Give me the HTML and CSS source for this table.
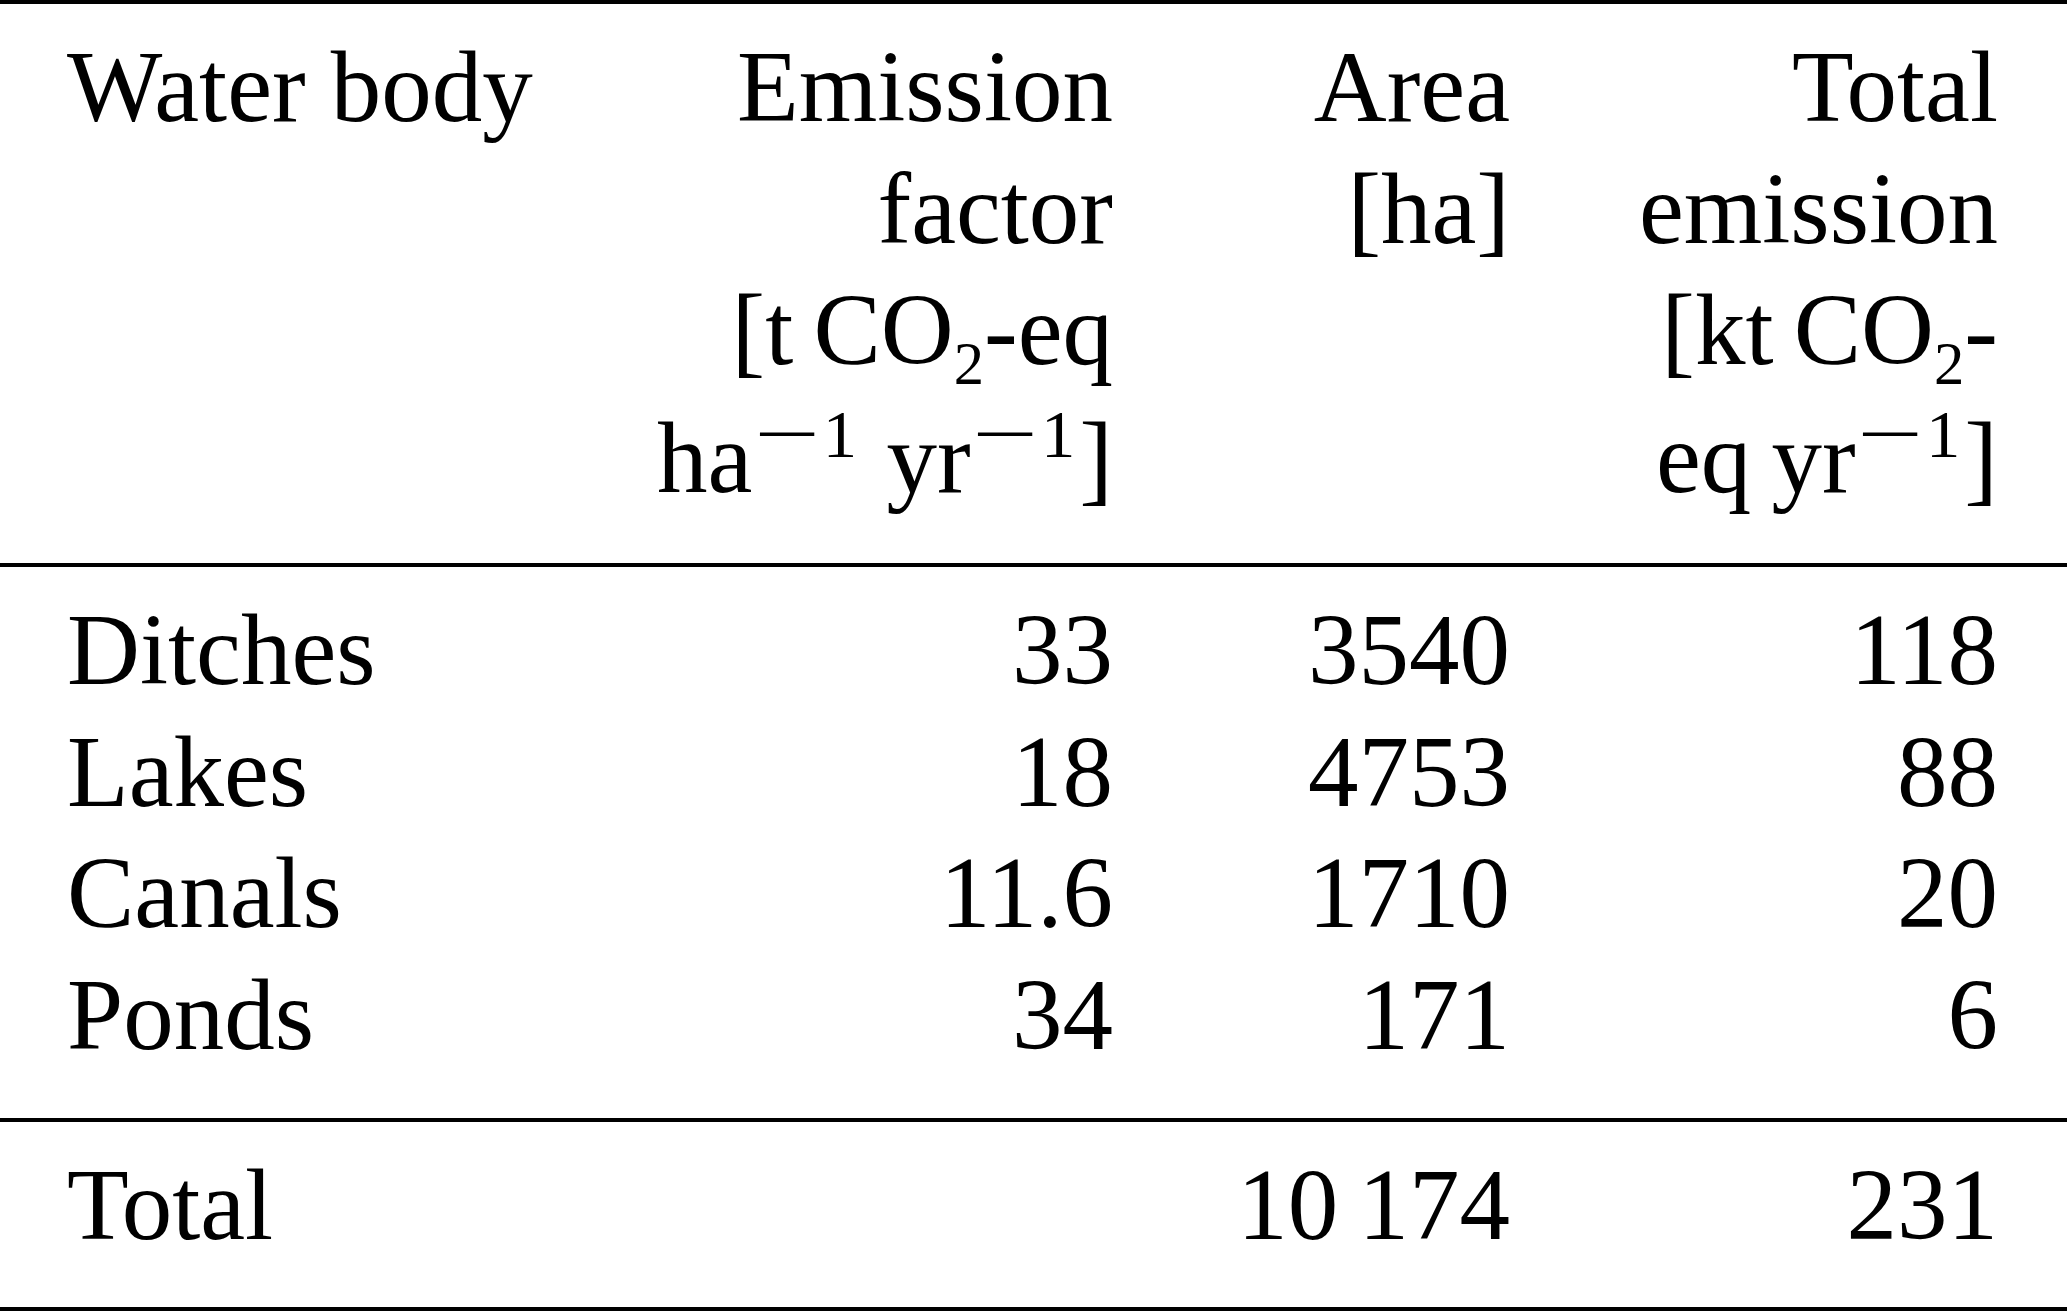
FILE: index.html
```html
<!DOCTYPE html>
<html lang="en">

<head>
    <meta charset="utf-8">
    <title>Emissions from water bodies</title>
    <link rel="stylesheet" href="styles.css">
</head>

<body>
    <table class="emissions">
        <thead>
            <tr>
                <th class="col-name">Water body</th>
                <th class="col-factor">Emission factor <span class="unit">[t&thinsp;CO<sub>2</sub>-eq</span> ha<sup><span class="minus">&minus;</span>1</sup> yr<sup><span class="minus">&minus;</span>1</sup>]</th>
                <th class="col-area">Area [ha]</th>
                <th class="col-total">Total emission [kt&thinsp;CO<sub>2</sub>-eq&thinsp;yr<sup><span class="minus">&minus;</span>1</sup>]</th>
            </tr>
        </thead>
        <tbody>
            <tr>
                <td class="col-name">Ditches</td>
                <td class="col-factor">33</td>
                <td class="col-area">3540</td>
                <td class="col-total">118</td>
            </tr>
            <tr>
                <td class="col-name">Lakes</td>
                <td class="col-factor">18</td>
                <td class="col-area">4753</td>
                <td class="col-total">88</td>
            </tr>
            <tr>
                <td class="col-name">Canals</td>
                <td class="col-factor">11.6</td>
                <td class="col-area">1710</td>
                <td class="col-total">20</td>
            </tr>
            <tr>
                <td class="col-name">Ponds</td>
                <td class="col-factor">34</td>
                <td class="col-area">171</td>
                <td class="col-total">6</td>
            </tr>
        </tbody>
        <tfoot>
            <tr>
                <td class="col-name">Total</td>
                <td class="col-factor"></td>
                <td class="col-area">10&thinsp;174</td>
                <td class="col-total">231</td>
            </tr>
        </tfoot>
    </table>
</body>

</html>
```

FILE: styles.css
```css
:root {
    --ink: #000;
    --rule: 4px solid #000;
}

body {
    margin: 0;
    background: #fff;
    color: var(--ink);
    font-family: 'Liberation Serif', 'Times New Roman', serif;
}

.emissions {
    width: 2067px;
    table-layout: fixed;
    border-collapse: separate;
    border-spacing: 0;
    font-size: 101px;
    line-height: 121.7px;
}

.emissions th,
.emissions td {
    box-sizing: border-box;
    padding: 0;
    font-weight: normal;
    text-align: right;
    vertical-align: top;
    white-space: normal;
}

/* columns */
.col-name {
    width: 654px;
    padding-left: 67px !important;
    text-align: left !important;
}

.col-factor {
    width: 556px;
    padding-right: 97px !important;
}

.col-area {
    width: 398px;
    padding-right: 98px !important;
}

.col-total {
    width: 459px;
    padding-right: 69px !important;
}

/* rules */
.emissions thead th {
    border-top: var(--rule);
    border-bottom: var(--rule);
    padding-top: 23px;
    padding-bottom: 43px;
}

.emissions tbody tr:first-child td {
    padding-top: 23px;
}

.emissions tbody tr:last-child td {
    padding-bottom: 41px;
}

.emissions tfoot td {
    border-top: var(--rule);
    border-bottom: var(--rule);
    padding-top: 23px;
    padding-bottom: 41px;
}

/* units */
.unit {
    white-space: nowrap;
}

sub {
    font-size: 0.6em;
    line-height: 0;
    vertical-align: -20px;
}

sup {
    font-size: 0.68em;
    line-height: 85.6px;
    vertical-align: 35px;
    margin-right: 0.06em;
}

.minus {
    display: inline-block;
    margin: 0 0.24em 0 0.22em;
    transform: scaleX(1.7);
}
```
